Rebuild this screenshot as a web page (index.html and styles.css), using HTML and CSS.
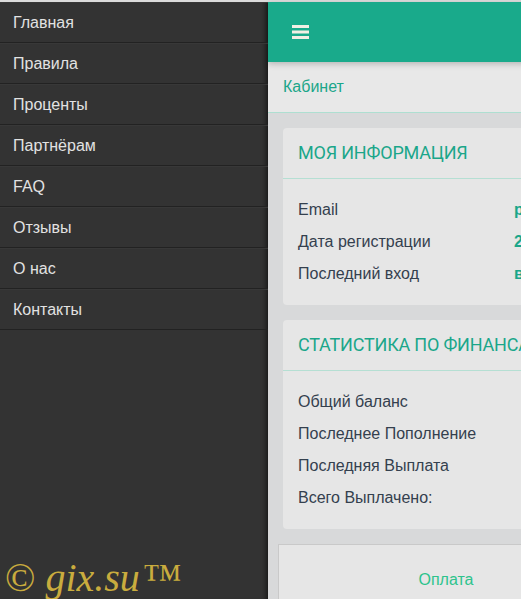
FILE: index.html
```html
<!DOCTYPE html>
<html lang="ru">
<head>
<meta charset="utf-8">
<title>Кабинет</title>
<link rel="stylesheet" href="styles.css">
</head>
<body>
<div class="page">
  <aside class="sidebar">
    <ul class="menu">
      <li class="menu-item">Главная</li>
      <li class="menu-item">Правила</li>
      <li class="menu-item">Проценты</li>
      <li class="menu-item">Партнёрам</li>
      <li class="menu-item">FAQ</li>
      <li class="menu-item">Отзывы</li>
      <li class="menu-item">О нас</li>
      <li class="menu-item">Контакты</li>
    </ul>
    <div class="watermark"><span class="wm-c">©</span> <span class="wm-name">gix.su</span><span class="wm-tm">™</span></div>
  </aside>
  <main class="main">
    <header class="topbar">
      <svg class="burger" width="17" height="14" viewBox="0 0 17 14"><rect x="0" y="0" width="17" height="3" fill="#f1efe4"/><rect x="0" y="5.5" width="17" height="3" fill="#f1efe4"/><rect x="0" y="11" width="17" height="3" fill="#f1efe4"/></svg>
    </header>
    <div class="crumbs">Кабинет</div>
    <div class="content">
      <section class="card">
        <h2 class="card-title">Моя информация</h2>
        <div class="card-body">
          <div class="row"><span class="label">Email</span><span class="value">pavel.ivanov@mail.ru</span></div>
          <div class="row"><span class="label">Дата регистрации</span><span class="value">2017-03-14 12:40</span></div>
          <div class="row"><span class="label">Последний вход</span><span class="value">вчера</span></div>
        </div>
      </section>
      <section class="card">
        <h2 class="card-title">Статистика по финансам</h2>
        <div class="card-body">
          <div class="row"><span class="label">Общий баланс</span><span class="value"></span></div>
          <div class="row"><span class="label">Последнее Пополнение</span><span class="value"></span></div>
          <div class="row"><span class="label">Последняя Выплата</span><span class="value"></span></div>
          <div class="row"><span class="label">Всего Выплачено:</span><span class="value"></span></div>
        </div>
      </section>
      <div class="tile">Оплата</div>
    </div>
  </main>
</div>
</body>
</html>
```
FILE: styles.css
```css
* { box-sizing: border-box; }
html, body {
  margin: 0;
  padding: 0;
  height: 100%;
  overflow: hidden;
}
body {
  font-family: "Liberation Sans", Arial, sans-serif;
  background: #dadada;
}
.page {
  display: flex;
  align-items: stretch;
  padding-top: 2px;
  height: 599px;
  width: 900px;
  background: #dcdcdc;
}
.sidebar {
  position: relative;
  flex: 0 0 268px;
  background: #333333;
  box-shadow: inset -6px 0 5px -4px rgba(0, 0, 0, 0.55);
}
.menu {
  list-style: none;
  margin: 0;
  padding: 0;
}
.menu-item {
  height: 41px;
  line-height: 39px;
  padding-left: 13px;
  font-size: 16px;
  color: #e2e2e2;
  border-top: 1px solid #383838;
  border-bottom: 1px solid #222222;
}
.watermark {
  position: absolute;
  left: 5px;
  bottom: 1px;
  font-family: "Liberation Serif", "Times New Roman", serif;
  font-size: 40px;
  line-height: 40px;
  color: #c9ac3e;
  white-space: nowrap;
}
.wm-name { font-style: italic; }
.wm-tm { margin-left: 3px; }
.main {
  flex: 0 0 632px;
  display: flex;
  flex-direction: column;
  background: #d8d9da;
  min-height: 0;
}
.main > * { flex-shrink: 0; }
.topbar {
  position: relative;
  z-index: 1;
  height: 60px;
  background: #19aa8b;
  display: flex;
  align-items: center;
  padding-left: 24px;
  box-shadow: 0 2px 6px rgba(0, 0, 0, 0.22);
}
.burger { display: block; }
.crumbs {
  height: 51px;
  line-height: 50px;
  padding-left: 15px;
  font-size: 16px;
  color: #1ba68a;
  background: #e8e8e8;
  border-bottom: 1px solid #aedfd1;
}
.content {
  padding: 15px;
  display: flex;
  flex-direction: column;
  gap: 15px;
}
.content > * { flex-shrink: 0; }
.card {
  background: #e6e6e6;
  border-radius: 4px;
}
.card-title {
  margin: 0;
  height: 51px;
  line-height: 50px;
  padding-left: 15px;
  font-family: Roboto, "Open Sans", sans-serif;
  font-weight: 400;
  font-size: 18px;
  letter-spacing: -0.2px;
  text-transform: uppercase;
  color: #1ba68a;
  border-bottom: 1px solid #b5dfd3;
  white-space: nowrap;
}
.card-body {
  padding: 15px;
}
.row {
  display: flex;
  height: 32px;
  line-height: 32px;
  font-size: 16px;
  white-space: nowrap;
}
.label {
  flex: 0 0 216px;
  color: #34404e;
}
.value {
  color: #1ba68a;
  font-weight: bold;
}
.tile {
  margin-left: -5px;
  height: 70px;
  background: #e6e6e6;
  border: 1px solid #c9c9c9;
  text-align: center;
  width: 336px;
  padding-top: 26px;
  font-size: 16px;
  color: #2dc38c;
}
```
